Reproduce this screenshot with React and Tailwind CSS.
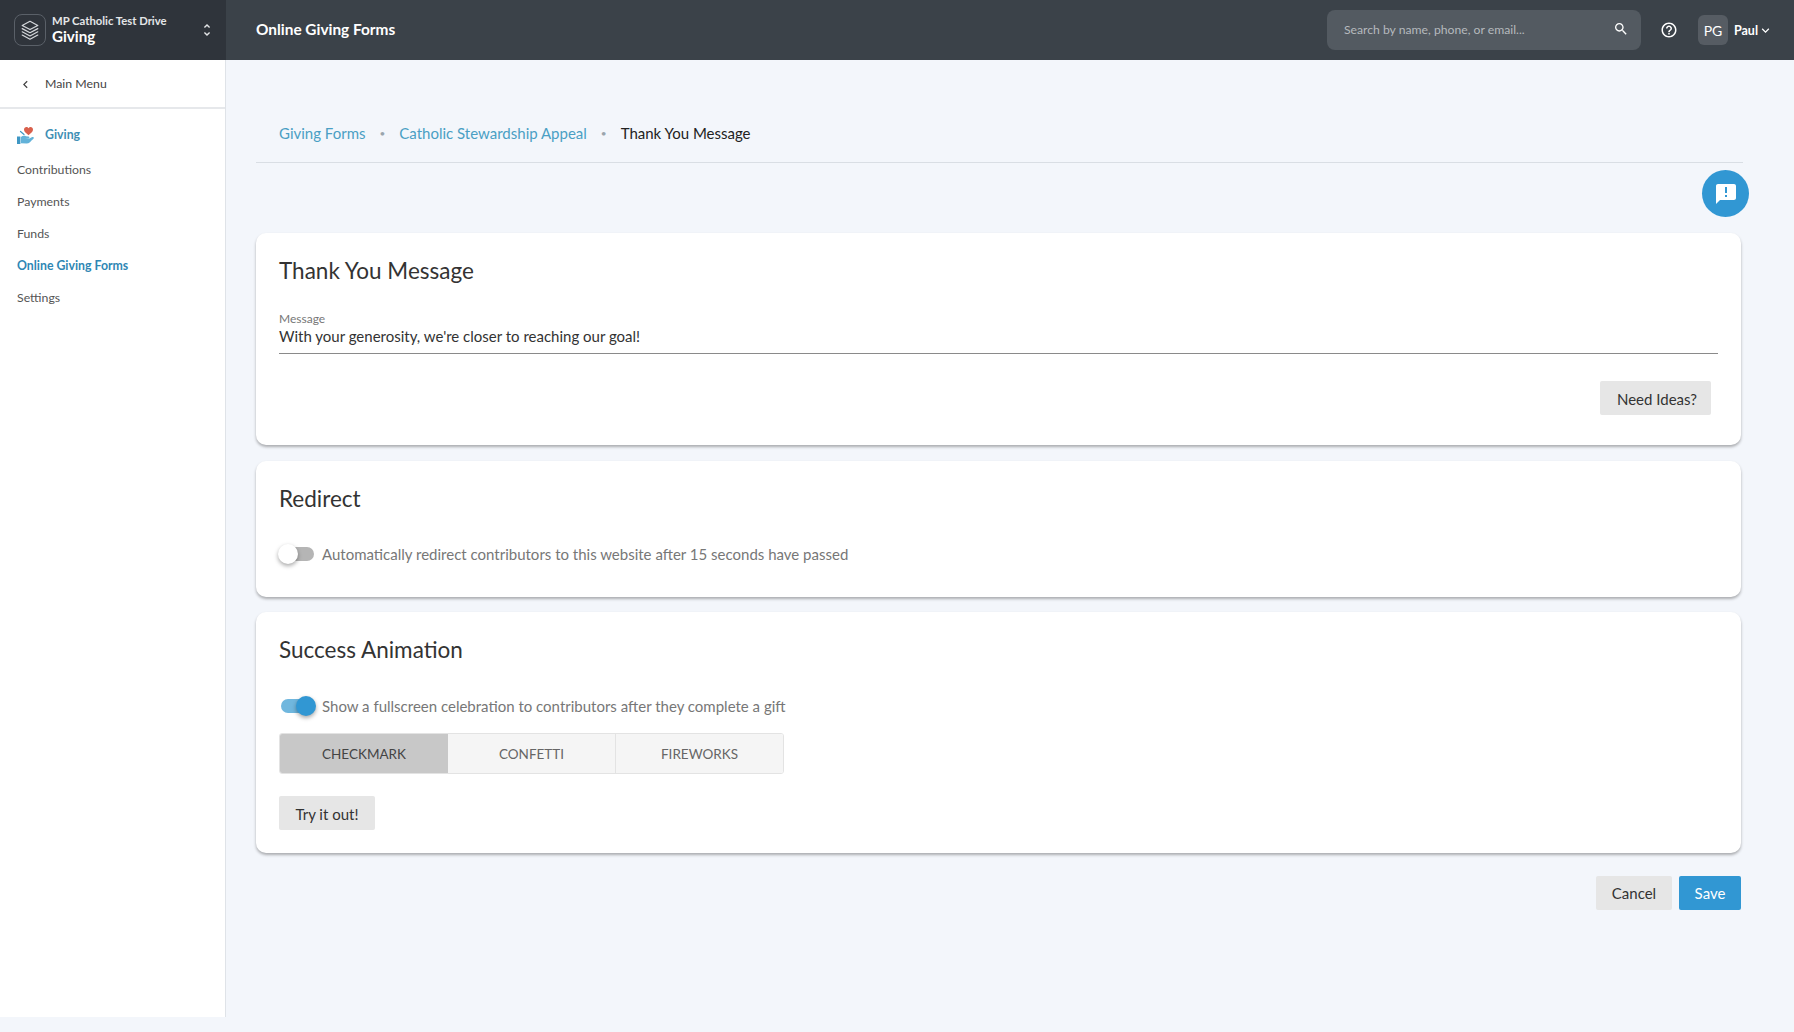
import React from 'react';

const MatIcon = ({ d, className }) => (
  <svg viewBox="0 0 24 24" fill="currentColor" className={className}>
    <path d={d} />
  </svg>
);

const icons = {
  search: 'M15.5 14h-.79l-.28-.27C15.41 12.59 16 11.11 16 9.5 16 5.91 13.09 3 9.5 3S3 5.91 3 9.5 5.91 16 9.5 16c1.61 0 3.09-.59 4.23-1.57l.27.28v.79l5 4.99L20.49 19l-4.99-5zm-6 0C7.01 14 5 11.99 5 9.5S7.01 5 9.5 5 14 7.01 14 9.5 11.99 14 9.5 14z',
  help: 'M11 18h2v-2h-2v2zm1-16C6.48 2 2 6.48 2 12s4.48 10 10 10 10-4.48 10-10S17.52 2 12 2zm0 18c-4.41 0-8-3.59-8-8s3.59-8 8-8 8 3.59 8 8-3.59 8-8 8zm0-14c-2.21 0-4 1.79-4 4h2c0-1.1.9-2 2-2s2 .9 2 2c0 2-3 1.75-3 5h2c0-2.25 3-2.5 3-5 0-2.21-1.79-4-4-4z',
  feedback: 'M20 2H4c-1.1 0-1.99.9-1.99 2L2 22l4-4h14c1.1 0 2-.9 2-2V4c0-1.1-.9-2-2-2zm-7 9h-2V5h2v6zm0 4h-2v-2h2v2z',
  down: 'M16.59 8.59L12 13.17 7.41 8.59 6 10l6 6 6-6z',
  left: 'M15.41 7.41L14 6l-6 6 6 6 1.41-1.41L10.83 12z',
  unfold: 'M12 5.83L15.17 9l1.41-1.41L12 3 7.41 7.59 8.83 9 12 5.83zm0 12.34L8.83 15l-1.41 1.41L12 21l4.59-4.59L15.17 15 12 18.17z',
};

const StackLogo = () => (
  <svg viewBox="0 0 24 24" fill="none" stroke="#d5d8dc" strokeWidth="1.3" strokeLinejoin="round" strokeLinecap="round" className="w-[22px] h-[22px]">
    <path d="M12 2.5 L20.5 7 L12 11.5 L3.5 7 Z" />
    <path d="M3.5 10.5 L12 15 L20.5 10.5" />
    <path d="M3.5 14 L12 18.5 L20.5 14" />
    <path d="M3.5 17.5 L12 22 L20.5 17.5" />
  </svg>
);

const GivingIcon = () => (
  <svg viewBox="0 0 17 19" className="w-[17px] h-[19px] shrink-0">
    <path d="M11.5 9.2 C8.6 7 7 5.6 7 3.6 C7 2 8.2 1 9.4 1 C10.3 1 11 1.5 11.5 2.2 C12 1.5 12.7 1 13.6 1 C14.9 1 16 2 16 3.6 C16 5.6 14.4 7 11.5 9.2 Z" fill="#d9604c" />
    <path d="M3.5 5.5 L7 8.5" stroke="#3f97c4" strokeWidth="1.2" strokeLinecap="round" />
    <path d="M0 10.5 H3.4 V18 H0 Z" fill="#3f97c4" />
    <path d="M3.9 11 C5.5 9.6 7.5 9.6 9 10.3 L11.4 10.4 C12.8 10.5 12.8 12.2 11.4 12.3 L8 12.5 L12.4 12.5 L15.2 11.1 C16.6 10.6 17.4 12 16.2 12.9 C13.8 15 12.2 17.6 9.6 17.6 L3.9 17.2 Z" fill="#62b2d9" />
  </svg>
);

const Switch = ({ on }) => (
  <div className="relative w-[37px] h-[24px] shrink-0">
    <div className={`absolute top-[5px] h-[14px] rounded-full ${on ? 'left-[3px] w-[33px] bg-[#70b7de]' : 'left-[3px] w-[33px] bg-[#b5b5b5]'}`} />
    <div className={`absolute top-[2px] w-[20px] h-[20px] rounded-full shadow-[0_2px_4px_rgba(0,0,0,0.35)] ${on ? 'left-[18px] bg-[#3197d3]' : 'left-0 bg-white'}`} />
  </div>
);

const GrayButton = ({ children, className = '' }) => (
  <button className={`h-[34px] bg-[#e6e6e6] rounded-[2px] text-[15px] text-[#333] flex items-center justify-center ${className}`}>
    {children}
  </button>
);

const Card = ({ title, className = '', children }) => (
  <section className={`bg-white rounded-[10px] shadow-[0_2px_3px_rgba(0,0,0,0.3)] px-[23px] ${className}`}>
    <h2 className="text-[22.5px] leading-[30px] text-[#333] pt-[23px] mb-[-1px]">{title}</h2>
    {children}
  </section>
);

const navItems = ['Contributions', 'Payments', 'Funds', 'Online Giving Forms', 'Settings'];

const App = () => {
  return (
    <div className="h-[1032px] w-[1794px] overflow-hidden flex flex-col bg-[#f3f6fb] font-['Lato',sans-serif]">
      <header className="h-[60px] shrink-0 flex bg-[#3b4249] text-white">
        <div className="w-[226px] shrink-0 bg-[#2f343b] flex items-center pl-[14px] pr-[11px]">
          <div className="w-[32px] h-[32px] rounded-[8px] border border-[#5a6068] flex items-center justify-center">
            <StackLogo />
          </div>
          <div className="ml-[6px] flex-1 mb-[3px]">
            <div className="text-[11.3px] leading-[14px] font-bold text-[#e4e6e8]">MP Catholic Test Drive</div>
            <div className="text-[15.2px] leading-[16px] font-bold">Giving</div>
          </div>
          <MatIcon d={icons.unfold} className="w-[16px] h-[20px] text-[#e4e6e8]" />
        </div>
        <div className="flex-1 flex items-center pl-[30px]">
          <h1 className="text-[15.4px] font-bold">Online Giving Forms</h1>
          <div className="ml-auto w-[314px] h-[40px] rounded-[8px] bg-[#535a61] flex items-center pl-[17px] pr-[12px]">
            <span className="text-[12.2px] text-[#b5b9bd]">Search by name, phone, or email...</span>
            <MatIcon d={icons.search} className="ml-auto mb-[2px] w-[16px] h-[16px] text-white" />
          </div>
          <MatIcon d={icons.help} className="ml-[19px] mb-[1px] w-[18px] h-[18px] text-white" />
          <div className="ml-[20px] w-[30px] h-[30px] rounded-[6px] bg-[#565c63] flex items-center justify-center text-[14px]">PG</div>
          <span className="ml-[6px] text-[12.5px] leading-[18px] font-bold mt-[1px]">Paul</span>
          <MatIcon d={icons.down} className="ml-[0px] mr-[21px] w-[15px] h-[15px]" />
        </div>
      </header>

      <div className="flex-1 flex min-h-0">
        <aside className="w-[226px] shrink-0 h-[957px] bg-white border-r border-[#dfe3e8] text-[12.3px] text-[#555]">
          <div className="h-[49px] flex items-center border-b-2 border-[#e6e8eb] pl-[18px] pt-[1px]">
            <MatIcon d={icons.left} className="w-[15px] h-[15px] text-[#444]" />
            <span className="ml-[12px] text-[#444]">Main Menu</span>
          </div>
          <div className="h-[45px] flex items-center pl-[17px] pt-[7px]">
            <GivingIcon />
            <span className="ml-[11px] font-bold text-[#3f8fb5]">Giving</span>
          </div>
          <nav className="flex flex-col">
            {navItems.map((item) => (
              <a key={item} className={`h-[32px] flex items-center pl-[17px] ${item === 'Online Giving Forms' ? 'font-bold text-[#2f87b4]' : ''}`}>
                {item}
              </a>
            ))}
          </nav>
        </aside>

        <main className="relative flex-1 pl-[30px] pr-[53px]">
          <div className="h-[103px] flex items-end border-b border-[#d9dee4] mr-[-2px] pl-[23px] pb-[17px] text-[15px] leading-[24px]">
            <span className="text-[#4a9fc4]">Giving Forms</span>
            <span className="mx-[14px] text-[#9aa5ad] text-[10px]">•</span>
            <span className="text-[#4a9fc4]">Catholic Stewardship Appeal</span>
            <span className="mx-[14px] text-[#9aa5ad] text-[10px]">•</span>
            <span className="text-[#222]">Thank You Message</span>
          </div>

          <button className="absolute left-[1476px] top-[110px] w-[47px] h-[47px] rounded-full bg-[#3197d3] flex items-center justify-center text-white">
            <MatIcon d={icons.feedback} className="w-[24px] h-[24px]" />
          </button>

          <div className="mt-[70px] flex flex-col">
            <Card title="Thank You Message" className="h-[212px]">
              <div className="mt-[27px] border-b border-[#8a8a8a] pb-[7px]">
                <div className="text-[12px] leading-[14px] text-[#777]">Message</div>
                <div className="text-[15px] leading-[20px] text-[#333]">With your generosity, we're closer to reaching our goal!</div>
              </div>
              <div className="flex justify-end mt-[27px] pr-[7px]">
                <GrayButton className="w-[111px] pl-[3px] pt-[2px]">Need Ideas?</GrayButton>
              </div>
            </Card>

            <Card title="Redirect" className="h-[136px] mt-[16px]">
              <div className="mt-[29px] flex items-center gap-[7px] ml-[-1px] text-[15px] leading-[24px] text-[#777]">
                <Switch />
                <span>Automatically redirect contributors to this website after 15 seconds have passed</span>
              </div>
            </Card>

            <Card title="Success Animation" className="h-[241px] mt-[15px]">
              <div className="mt-[30px] flex items-center gap-[7px] ml-[-1px] text-[15px] leading-[24px] text-[#777]">
                <Switch on />
                <span>Show a fullscreen celebration to contributors after they complete a gift</span>
              </div>
              <div className="mt-[15px] w-[505px] h-[41px] flex rounded-[3px] overflow-hidden border border-[#e3e3e3] text-[13.5px]">
                <div className="w-[168px] pt-[1px] bg-[#c8c8c8] text-[#444] flex items-center justify-center">CHECKMARK</div>
                <div className="w-[168px] pt-[1px] bg-[#f5f5f5] text-[#666] flex items-center justify-center border-r border-[#e3e3e3]">CONFETTI</div>
                <div className="flex-1 pt-[1px] bg-[#f5f5f5] text-[#666] flex items-center justify-center">FIREWORKS</div>
              </div>
              <GrayButton className="w-[96px] mt-[22px] pt-[2px]">Try it out!</GrayButton>
            </Card>

            <div className="flex justify-end gap-[7px] mt-[23px]">
              <GrayButton className="w-[76px]">Cancel</GrayButton>
              <button className="w-[62px] h-[34px] rounded-[2px] bg-[#3197d3] text-[15px] text-white flex items-center justify-center">Save</button>
            </div>
          </div>
        </main>
      </div>
    </div>
  );
};

export default App;
